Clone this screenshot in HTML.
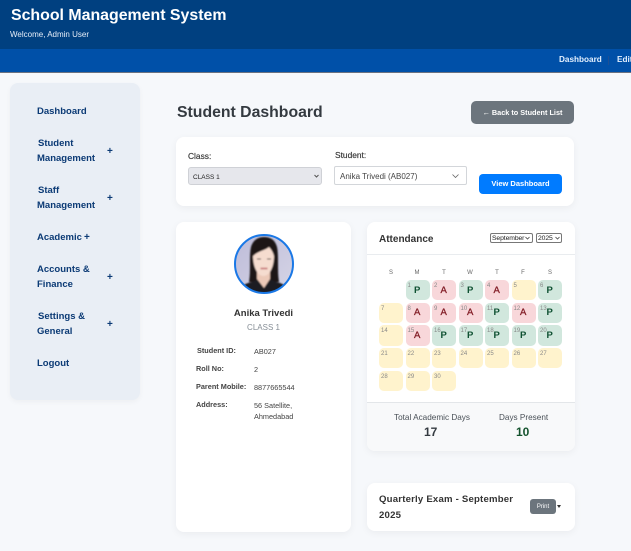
<!DOCTYPE html>
<html lang="en"><head><meta charset="utf-8"><title>School Management System</title>
<style>
*{box-sizing:border-box;margin:0;padding:0}
html,body{width:631px;height:551px;overflow:hidden}
body{position:relative;background:#f6f8fb;font-family:"Liberation Sans",sans-serif;color:#333}
.a{position:absolute;white-space:nowrap}
.card{position:absolute;background:#fff;border-radius:8px;box-shadow:0 2px 8px rgba(0,0,0,.05)}
.nav{color:#0b3a75;font-weight:700;font-size:9.5px;line-height:15px}
.plus{color:#0b3a75;font-weight:700;font-size:10px;line-height:12px}
.lbl{font-size:7.3px;font-weight:700;color:#444;line-height:10px}
.val{font-size:7.3px;color:#444;line-height:11px}
.cal{position:absolute;left:379px;top:280px;width:183px;display:grid;grid-template-columns:repeat(7,24px);grid-auto-rows:20.3px;column-gap:2.5px;row-gap:2.4px}
.cal div{position:relative;border-radius:5px;font-size:6px;line-height:7px;padding:3px 0 0 2px;color:#888}
.cal b{position:absolute;left:8.5px;top:4.5px;font-size:9.5px;line-height:12px;font-weight:700}
.p{background:#d1e7dd}.p b{color:#0f5132}
.x{background:#f8d7da}.x b{color:#842029;font-weight:400;-webkit-text-stroke:.3px #842029}
.h{background:#fff3cd}
.dow{position:absolute;top:270px;font-size:6px;line-height:7px;color:#666;width:24px;text-align:center}
.sel{position:absolute;background:#fff;border:1px solid #777;border-radius:2px;font-size:6.8px;line-height:9px;color:#222;padding-left:1px;white-space:nowrap;overflow:hidden;letter-spacing:-.1px}
</style></head><body>
<div class="a" style="left:0;top:0;width:631px;height:49px;background:#004080"></div>
<div class="a" style="left:0;top:49px;width:631px;height:24px;background:#0050a8;border-bottom:1.5px solid #6b7280"></div>
<div class="a" style="left:11px;top:7px;font-size:15.9px;line-height:18px;font-weight:700;color:#fff">School Management System</div>
<div class="a" style="left:10px;top:30px;font-size:8px;line-height:10px;color:#e6eef8">Welcome, Admin User</div>
<div class="a" style="left:559px;top:55px;font-size:8.2px;line-height:10px;font-weight:700;color:#e3f0ff">Dashboard</div>
<div class="a" style="left:608px;top:56px;width:1px;height:9px;background:#1d4f95"></div>
<div class="a" style="left:617px;top:55px;font-size:8.2px;line-height:10px;font-weight:700;color:#e3f0ff">Edit</div>

<div class="a" style="left:10px;top:83px;width:130px;height:317px;background:#e9eef5;border-radius:8px;box-shadow:0 2px 6px rgba(0,0,0,.04)"></div>
<div class="a nav" style="left:37px;top:104px">Dashboard</div>
<div class="a nav" style="left:37px;top:136px"><span style="margin-left:1px">Student</span><br>Management</div><div class="a plus" style="left:107px;top:146px">+</div>
<div class="a nav" style="left:37px;top:183px"><span style="margin-left:1px">Staff</span><br>Management</div><div class="a plus" style="left:107px;top:193px">+</div>
<div class="a nav" style="left:37px;top:230px">Academic</div><div class="a plus" style="left:84px;top:232px">+</div>
<div class="a nav" style="left:37px;top:262px">Accounts &amp;<br>Finance</div><div class="a plus" style="left:107px;top:272px">+</div>
<div class="a nav" style="left:37px;top:309px"><span style="margin-left:1px">Settings &amp;</span><br>General</div><div class="a plus" style="left:107px;top:319px">+</div>
<div class="a nav" style="left:37px;top:356px">Logout</div>

<div class="a" style="left:177px;top:103px;font-size:15.8px;line-height:19px;font-weight:700;color:#343a40">Student Dashboard</div>
<div class="a" style="left:471px;top:101px;width:103px;height:23px;background:#6c757d;border-radius:5px;color:#fff;font-size:7.3px;font-weight:700;line-height:23px;text-align:center">← Back to Student List</div>

<div class="card" style="left:176px;top:137px;width:398px;height:69px"></div>
<div class="a" style="left:188px;top:151px;font-size:8.4px;line-height:10px;color:#333;-webkit-text-stroke:.15px #333">Class:</div>
<div class="a" style="left:188px;top:167px;width:134px;height:18px;background:#e6e7ec;border:1px solid #cfd1d6;border-radius:3px;font-size:6.5px;line-height:19px;padding-left:4px;color:#222">CLASS 1</div>
<svg class="a" style="left:314px;top:174px" width="5" height="4" viewBox="0 0 5 4"><path d="M.5 1l2 2 2-2" fill="none" stroke="#555"/></svg>
<div class="a" style="left:335px;top:150px;font-size:8.4px;line-height:10px;color:#333;-webkit-text-stroke:.15px #333">Student:</div>
<div class="a" style="left:334px;top:166px;width:133px;height:19px;background:#fff;border:1px solid #d3d6da;border-radius:2px;font-size:8px;line-height:19px;padding-left:5px;color:#444">Anika Trivedi (AB027)</div>
<svg class="a" style="left:452px;top:174px" width="7" height="4" viewBox="0 0 7 4"><path d="M.5.5l3 3 3-3" fill="none" stroke="#666" stroke-width=".8"/></svg>
<div class="a" style="left:479px;top:174px;width:83px;height:20px;background:#007bff;border-radius:4px;color:#fff;font-size:7.5px;font-weight:700;line-height:20px;text-align:center">View Dashboard</div>

<div class="card" style="left:176px;top:222px;width:175px;height:310px"></div>
<svg class="a" style="left:234px;top:234px" width="60" height="60" viewBox="0 0 60 60">
<defs><clipPath id="c"><circle cx="30" cy="30" r="29"/></clipPath><filter id="f" x="-10%" y="-10%" width="120%" height="120%"><feGaussianBlur stdDeviation=".7"/></filter>
<linearGradient id="g" x1="0" y1="0" x2="1" y2="1"><stop offset="0" stop-color="#bdbbd8"/><stop offset="1" stop-color="#d6d5e6"/></linearGradient></defs>
<g clip-path="url(#c)"><rect width="60" height="60" fill="url(#g)"/>
<g filter="url(#f)">
<path d="M15 48C17 36 15 22 17 13 19 6 24 3 30 3c7 0 11 3 13 10 2 9 0 23 2 35z" fill="#1b1719"/>
<path d="M3 60c2-7 8-11 15-12l7-3h10l7 3c7 1 13 5 15 12z" fill="#1f1c20"/>
<path d="M23 36h13v9l-6 9-7-9z" fill="#ecc9b8"/>
<path d="M19 22c0-7 4-11 10.500-11 7 0 10.500 4 10.500 11 0 10-4 20-10.500 20S19 32 19 22z" fill="#f5dccf"/>
<path d="M19 22c0-9 3-14 10.500-14C37 8 40 13 40 22c-1-4-3-7-5-9-3 3-11 4-16 9z" fill="#1b1719"/>
<path d="M23 25h4M33 25h4" stroke="#3a2b2b" stroke-width="1"/>
<path d="M26.500 34.500h7" stroke="#c0686c" stroke-width="1.500"/>
</g></g>
<circle cx="30" cy="30" r="29" fill="none" stroke="#1a78e6" stroke-width="2"/></svg>
<div class="a" style="left:176px;top:308px;width:175px;text-align:center;font-size:9.5px;line-height:11px;font-weight:700;color:#333">Anika Trivedi</div>
<div class="a" style="left:176px;top:323px;width:175px;text-align:center;font-size:8px;line-height:10px;color:#868e96">CLASS 1</div>
<div class="a lbl" style="left:197px;top:346px">Student ID:</div><div class="a val" style="left:254px;top:346px">AB027</div>
<div class="a lbl" style="left:196px;top:364px">Roll No:</div><div class="a val" style="left:254px;top:364px">2</div>
<div class="a lbl" style="left:196px;top:382px">Parent Mobile:</div><div class="a val" style="left:254px;top:382px">8877665544</div>
<div class="a lbl" style="left:196px;top:400px">Address:</div><div class="a val" style="left:254px;top:400px;line-height:11px">56 Satellite,<br>Ahmedabad</div>

<div class="card" style="left:367px;top:222px;width:208px;height:229px"></div>
<div class="a" style="left:379px;top:234px;font-size:10px;line-height:12px;font-weight:700;color:#333">Attendance</div>
<div class="sel" style="left:490px;top:233px;width:43px;height:10px">September</div>
<svg class="a" style="left:525px;top:236px" width="5" height="4" viewBox="0 0 5 4"><path d="M.5 1l2 2 2-2" fill="none" stroke="#444" stroke-width=".8"/></svg>
<div class="sel" style="left:536px;top:233px;width:26px;height:10px">2025</div>
<svg class="a" style="left:555px;top:236px" width="5" height="4" viewBox="0 0 5 4"><path d="M.5 1l2 2 2-2" fill="none" stroke="#444" stroke-width=".8"/></svg>
<div class="a" style="left:367px;top:254px;width:208px;height:1px;background:#e9ecef"></div>
<div class="dow" style="left:379px">S</div><div class="dow" style="left:405px">M</div><div class="dow" style="left:432px">T</div><div class="dow" style="left:458px">W</div><div class="dow" style="left:485px">T</div><div class="dow" style="left:511px">F</div><div class="dow" style="left:538px">S</div>
<div class="cal">
<div style="background:none"></div><div class="p">1<b>P</b></div><div class="x">2<b>A</b></div><div class="p">3<b>P</b></div><div class="x">4<b>A</b></div><div class="h">5</div><div class="p">6<b>P</b></div>
<div class="h">7</div><div class="x">8<b>A</b></div><div class="x">9<b>A</b></div><div class="x">10<b>A</b></div><div class="p">11<b>P</b></div><div class="x">12<b>A</b></div><div class="p">13<b>P</b></div>
<div class="h">14</div><div class="x">15<b>A</b></div><div class="p">16<b>P</b></div><div class="p">17<b>P</b></div><div class="p">18<b>P</b></div><div class="p">19<b>P</b></div><div class="p">20<b>P</b></div>
<div class="h">21</div><div class="h">22</div><div class="h">23</div><div class="h">24</div><div class="h">25</div><div class="h">26</div><div class="h">27</div>
<div class="h">28</div><div class="h">29</div><div class="h">30</div>
</div>
<div class="a" style="left:367px;top:402px;width:208px;height:49px;background:#f8f9fa;border-top:1px solid #e3e6e9;border-radius:0 0 8px 8px"></div>
<div class="a" style="left:394px;top:413px;font-size:8.2px;line-height:10px;color:#495057">Total Academic Days</div>
<div class="a" style="left:499px;top:413px;font-size:8.2px;line-height:10px;color:#495057">Days Present</div>
<div class="a" style="left:424px;top:425px;font-size:12px;line-height:15px;font-weight:700;color:#343a40">17</div>
<div class="a" style="left:516px;top:425px;font-size:12px;line-height:15px;font-weight:700;color:#14532d">10</div>

<div class="card" style="left:367px;top:483px;width:208px;height:48px"></div>
<div class="a" style="left:379px;top:492px;font-size:9.6px;line-height:16px;font-weight:700;color:#333;letter-spacing:.2px">Quarterly Exam - September<br>2025</div>
<div class="a" style="left:530px;top:499px;width:26px;height:15px;background:#6c757d;border-radius:3px;color:#fff;font-size:6px;line-height:17px;text-align:center">Print</div>
<svg class="a" style="left:557px;top:505px" width="4" height="3" viewBox="0 0 4 3"><path d="M0 0h4L2 3z" fill="#333"/></svg>
</body></html>
